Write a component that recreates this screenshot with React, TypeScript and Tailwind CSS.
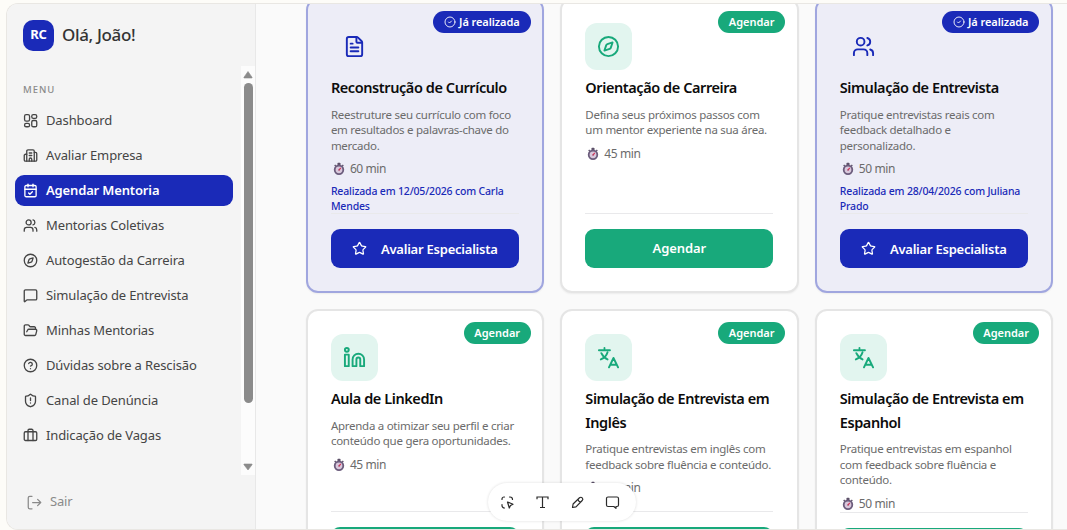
import React from 'react';
import { Briefcase, Building2, CalendarCheck, CircleCheck, CircleHelp, Compass, FileText, FolderOpen, Linkedin, MessageSquare, ShieldAlert, Star, Users } from 'lucide-react';

type IconType = React.ComponentType<{ size?: number; strokeWidth?: number; className?: string }>;

function DashboardIcon({ size = 16, strokeWidth = 2, className = '' }) {
  return (
    <svg width={size} height={size} viewBox="0 0 24 24" fill="none" stroke="currentColor" strokeWidth={strokeWidth} className={className}>
      <rect x="2.5" y="2.5" width="8" height="10.5" rx="2.5" />
      <rect x="14" y="2.5" width="8" height="6" rx="2.5" />
      <rect x="14" y="12" width="8" height="10" rx="2.5" />
      <rect x="2.5" y="16.5" width="8" height="5.5" rx="2.5" />
    </svg>
  );
}

function TranslateIcon({ size = 24, className = '' }) {
  return (
    <svg width={size} height={size} viewBox="0 0 24 24" fill="none" stroke="currentColor" strokeWidth="2" strokeLinecap="round" strokeLinejoin="round" className={className}>
      <path d="M2 4.500H13.500M7.800 2v.5" />
      <path d="M11 6.500C10 10 7.500 12.500 4 14M4.500 7.500c1.500 3 4 5.500 6.500 6.500" />
      <path d="M12.500 22.300 17.200 12.500l4.800 9.800M14.300 19.500h5.800" />
    </svg>
  );
}

function Stopwatch() {
  return (
    <svg width="12" height="14" viewBox="0 0 12 14" fill="none">
      <rect x="4.5" y="0.8" width="3" height="2.4" rx="0.6" fill="#5c5068" />
      <path d="m9.3 3 1 1M2.7 3l-1 1" stroke="#5c5068" strokeWidth="1.4" />
      <circle cx="6" cy="7.8" r="4.3" fill="#d9c8dc" stroke="#6b5c7c" strokeWidth="1.8" />
      <path d="m6 8 1.8-2.2" stroke="#d8375b" strokeWidth="1.2" />
      <circle cx="6" cy="8" r="0.8" fill="#a53c5c" />
    </svg>
  );
}

const menu: { label: string; icon: IconType; active?: boolean }[] = [
  { label: 'Dashboard', icon: DashboardIcon },
  { label: 'Avaliar Empresa', icon: Building2 },
  { label: 'Agendar Mentoria', icon: CalendarCheck, active: true },
  { label: 'Mentorias Coletivas', icon: Users },
  { label: 'Autogestão da Carreira', icon: Compass },
  { label: 'Simulação de Entrevista', icon: MessageSquare },
  { label: 'Minhas Mentorias', icon: FolderOpen },
  { label: 'Dúvidas sobre a Rescisão', icon: CircleHelp },
  { label: 'Canal de Denúncia', icon: ShieldAlert },
  { label: 'Indicação de Vagas', icon: Briefcase },
];

function Sidebar() {
  return (
    <aside className="flex w-[249px] shrink-0 flex-col border-r border-[#e8e8e8] bg-[#f4f4f4]">
      <div className="flex h-[62px] shrink-0 items-center gap-2 pl-4">
        <div className="flex size-[31px] items-center justify-center rounded-[10px] bg-[#1a2ab8] text-[13px] font-bold tracking-[-0.3px] text-white">RC</div>
        <div className="text-[17px] font-medium tracking-[-0.350px] text-[#333]">Olá, João!</div>
      </div>
      <div className="flex h-[409px] shrink-0">
        <nav className="flex grow flex-col pl-2 pt-4">
          <div className="h-[23px] shrink-0 pl-2 text-[9.500px] font-medium leading-[16px] tracking-[0.950px] text-[#8a8a8a]">MENU</div>
          {menu.map(({ label, icon: Icon, active }) => (
            <div key={label} className={`mb-1 flex h-[31px] w-[218px] shrink-0 items-center gap-2 rounded-[9px] pl-2 text-[13px] ${active ? 'bg-[#1a2ab8] font-semibold tracking-[-0.150px] text-white' : 'tracking-[-0.120px] text-[#454545]'}`}>
              <Icon size={15} strokeWidth={2.1} className="shrink-0" />
              <span className="whitespace-nowrap">{label}</span>
            </div>
          ))}
        </nav>
        <div className="flex w-[14px] shrink-0 flex-col items-center bg-[#fcfcfc]">
          <svg width="14" height="17" viewBox="0 0 14 17"><path d="M3 11.200 7 5.500l4 5.700c.4.6 0 .8-.5.8h-7c-.5 0-.9-.2-.5-.8Z" fill="#8b8b8b" stroke="#8b8b8b" strokeWidth="0.6" /></svg>
          <div className="h-[320px] w-[9px] rounded-full bg-[#8b8b8b]" />
          <div className="grow" />
          <svg width="14" height="16" viewBox="0 0 14 16"><path d="M3 5.800 7 11l4-5.200c.4-.6 0-.8-.5-.8h-7c-.5 0-.9.2-.5.8Z" fill="#8b8b8b" stroke="#8b8b8b" strokeWidth="0.6" /></svg>
        </div>
      </div>
      <div className="flex h-[56px] items-center gap-2 pl-5 text-[13px] tracking-[-0.2px] text-[#8a8a8a]">
        <svg width="15" height="15" viewBox="0 0 24 24" fill="none" stroke="currentColor" strokeWidth="2" strokeLinecap="round" strokeLinejoin="round">
          <path d="M8 2H4.500a2.500 2.500 0 0 0-2.500 2.500v15A2.500 2.500 0 0 0 4.500 22H8M9 12h13M17 7l5 5-5 5" />
        </svg>
        Sair
      </div>
    </aside>
  );
}

interface CardData {
  title: string[];
  icon: IconType;
  desc: string[];
  time: string;
  note?: string[];
  action?: string;
}

const rows: CardData[][] = [
  [
    { title: ['Reconstrução de Currículo'], icon: FileText, desc: ['Reestruture seu currículo com foco', 'em resultados e palavras-chave do', 'mercado.'], time: '60 min', note: ['Realizada em 12/05/2026 com Carla', 'Mendes'], action: 'Avaliar Especialista' },
    { title: ['Orientação de Carreira'], icon: Compass, desc: ['Defina seus próximos passos com', 'um mentor experiente na sua área.'], time: '45 min', action: 'Agendar' },
    { title: ['Simulação de Entrevista'], icon: Users, desc: ['Pratique entrevistas reais com', 'feedback detalhado e', 'personalizado.'], time: '50 min', note: ['Realizada em 28/04/2026 com Juliana', 'Prado'], action: 'Avaliar Especialista' },
  ],
  [
    { title: ['Aula de LinkedIn'], icon: Linkedin, desc: ['Aprenda a otimizar seu perfil e criar', 'conteúdo que gera oportunidades.'], time: '45 min' },
    { title: ['Simulação de Entrevista em', 'Inglês'], icon: TranslateIcon, desc: ['Pratique entrevistas em inglês com', 'feedback sobre fluência e conteúdo.'], time: '45 min' },
    { title: ['Simulação de Entrevista em', 'Espanhol'], icon: TranslateIcon, desc: ['Pratique entrevistas em espanhol', 'com feedback sobre fluência e', 'conteúdo.'], time: '50 min' },
  ],
];

function Lines({ items }: { items: string[] }) {
  return <>{items.map((t) => <div key={t} className="whitespace-nowrap">{t}</div>)}</>;
}

function Card({ card, height }: { card: CardData; height: string }) {
  const done = !!card.note;
  const Icon = card.icon;
  return (
    <article className={`relative flex flex-col rounded-xl border-2 px-[23.300px] pt-[23px] pb-[23px] shadow-[0_1px_2px_rgba(0,0,0,0.06)] ${height} ${done ? 'border-[#a0a6df] bg-[#ededf7]' : 'border-[#e5e5e5] bg-white'}`}>
      <div className={`absolute right-[11.500px] top-[11px] flex h-[21.500px] items-center gap-1 rounded-full text-[11px] font-semibold text-white ${done ? 'bg-[#1a2ab8] px-[11px] tracking-[-0.080px]' : 'bg-[#18a97b] px-[10.500px] tracking-[-0.020px]'}`}>
        {done && <CircleCheck size={12} strokeWidth={1.8} className="-mr-px" />}
        {done ? 'Já realizada' : 'Agendar'}
      </div>
      <div className={`flex size-[47px] shrink-0 items-center justify-center rounded-[12px] ${done ? 'text-[#1a2ab8]' : 'bg-[#e2f5ef] text-[#18a97b]'}`}>
        <Icon size={23} strokeWidth={2} />
      </div>
      <h3 className="mt-[6px] shrink-0 text-[14.500px] font-semibold leading-[23.500px] tracking-[-0.420px] text-[#0c0c0c]"><Lines items={card.title} /></h3>
      <div className="mt-[7px] shrink-0 text-[11.500px] leading-[15.600px] tracking-[-0.270px] text-[#6b6b6b]"><Lines items={card.desc} /></div>
      <div className="mt-[7.500px] flex h-[17px] shrink-0 items-center gap-[5px] pl-[2px] text-[12px] tracking-[-0.400px] text-[#6b6b6b]"><Stopwatch />{card.time}</div>
      {card.note && <div className="mt-[6.500px] -mb-px shrink-0 text-[10.500px] font-medium leading-[15px] tracking-[-0.170px] text-[#1a2ab8]"><Lines items={card.note} /></div>}
      <div className="mt-auto border-t border-[#e9e9eb] pt-[15px]">
        <div className={`flex h-[39px] items-center justify-center rounded-[9px] text-[13px] font-semibold text-white ${done ? 'gap-[14px] bg-[#1a2ab8] tracking-[-0.230px]' : 'bg-[#18a97b] tracking-[-0.100px]'}`}>
          {done && <Star size={15} strokeWidth={2} />}
          {card.action && <span className="pt-px">{card.action}</span>}
        </div>
      </div>
    </article>
  );
}

function Toolbar() {
  return (
    <div className="absolute left-[488px] top-[483px] flex h-[38px] w-[148px] items-center gap-[20px] rounded-full bg-white pl-[12px] text-[#2b2b2b] shadow-[0_0_3px_rgba(0,0,0,0.14)]">
      <svg width="15" height="15" viewBox="0 0 15 15" fill="none" stroke="currentColor" strokeWidth="1.200" strokeLinecap="round" strokeLinejoin="round">
        <path d="M2 4.500V4a2 2 0 0 1 2-2h.5M9.500 2h.5a2.500 2.500 0 0 1 2.500 2.500M2 9.500v1a2.500 2.500 0 0 0 2.500 2.500M7.500 7l5.500 2.200-2.500 1.300-1.200 2.500Z" />
      </svg>
      <svg width="15" height="15" viewBox="0 0 15 15" fill="none" stroke="currentColor" strokeWidth="1.200"><path d="M2 4.200V2h11v2.200M7.500 2v10.500M5 12.500h5" /></svg>
      <svg width="15" height="15" viewBox="0 0 15 15" fill="none" stroke="currentColor" strokeWidth="1.200" strokeLinejoin="round"><path d="m2.500 12.500.6-3.500L9.500 2.800a1.900 1.900 0 0 1 2.700 2.700L6 11.900ZM8 4.300q.3 2.400 2.700 2.700" /></svg>
      <svg width="15" height="15" viewBox="0 0 15 15" fill="none" stroke="currentColor" strokeWidth="1.200" strokeLinejoin="round"><path d="M3 2h9a1.500 1.500 0 0 1 1.500 1.500V10a1.500 1.500 0 0 1-1.500 1.500h-1V13.300L8.800 11.500H3A1.500 1.500 0 0 1 1.500 10V3.500A1.500 1.500 0 0 1 3 2Z" /></svg>
    </div>
  );
}

export default function App() {
  return (
    <div className="relative h-[530px] w-[1067px] overflow-hidden bg-[#fdfcf8] pl-[6px] pt-[3px] font-['Noto_Sans','Open_Sans',sans-serif]">
      <div className="flex h-[527px] overflow-hidden rounded-l-[12px] border border-r-0 border-[#e9e7e3] bg-[#fafafa]">
        <Sidebar />
        <main className="min-w-0 grow overflow-hidden pl-[49.600px]">
          <div className="-mt-[6px] grid w-[747.400px] grid-cols-3 gap-4">
            {rows.map((row, i) => row.map((card) => <Card key={card.title.join()} card={card} height={i === 0 ? 'h-[295px]' : 'h-[282px]'} />))}
          </div>
        </main>
      </div>
      <Toolbar />
    </div>
  );
}
